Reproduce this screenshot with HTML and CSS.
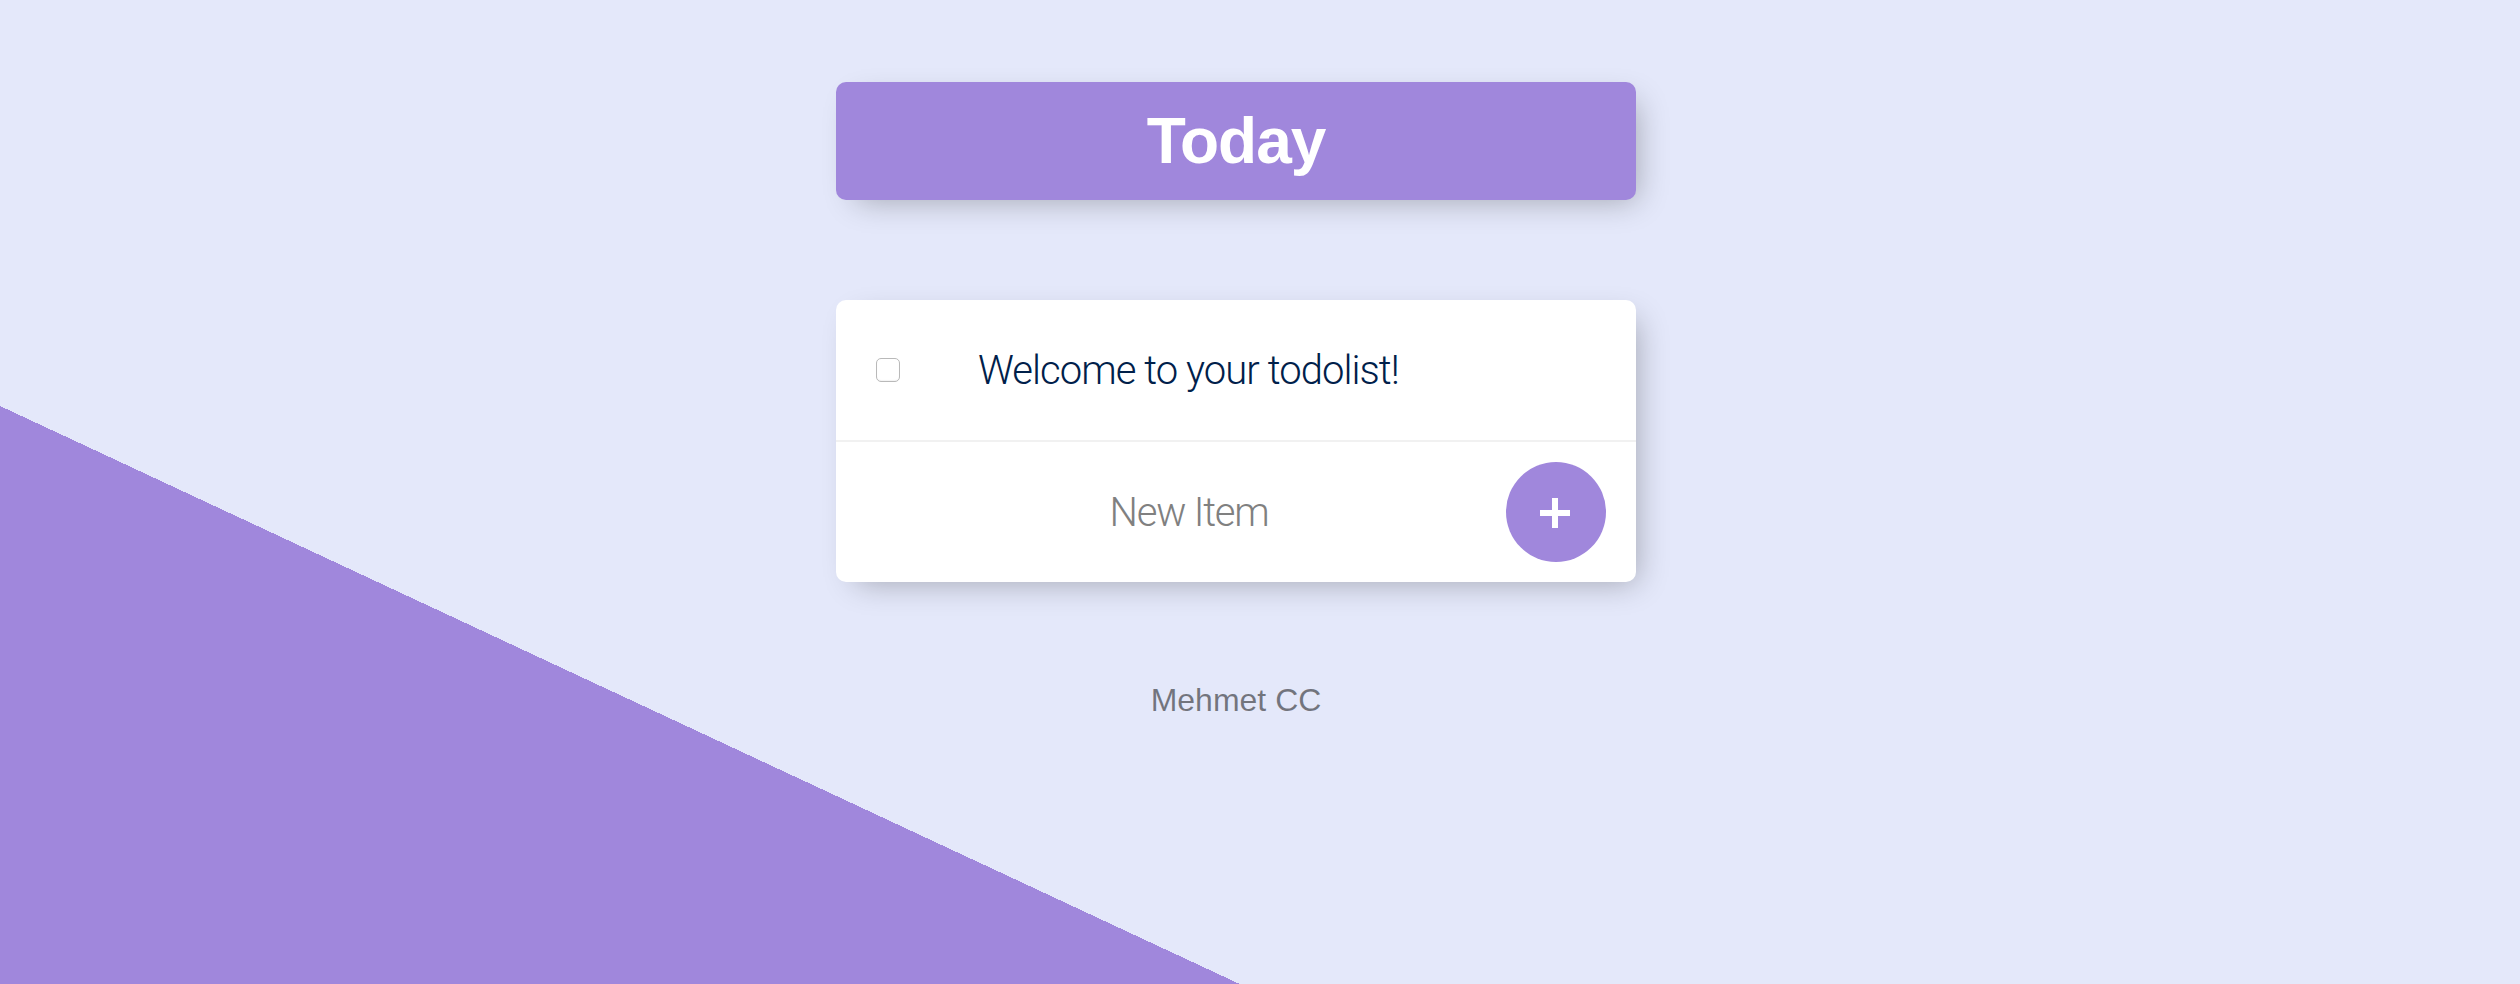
FILE: index.html
```html
<!DOCTYPE html>
<html lang="en">
<head>
<meta charset="utf-8">
<title>To Do List</title>
<link rel="stylesheet" href="styles.css">
</head>
<body>
<div class="page">
  <div class="box heading">
    <h1 class="title">Today</h1>
  </div>
  <div class="box list">
    <div class="item">
      <input class="check" type="checkbox">
      <p class="item-text">Welcome to your todolist!</p>
    </div>
    <form class="item add-form" onsubmit="return false">
      <input class="new-item" type="text" name="newItem" placeholder="New Item" autocomplete="off">
      <button class="add-btn" type="submit" aria-label="Add">
        <svg width="30" height="30" viewBox="0 0 30 30"><rect x="0" y="12" width="30" height="6" fill="#fff"/><rect x="12" y="0" width="6" height="30" fill="#fff"/></svg>
      </button>
    </form>
  </div>
  <footer class="footer">Mehmet CC</footer>
</div>
</body>
</html>
```
FILE: styles.css
```css
html {
  background-color: #e4e8fa;
  background-image: linear-gradient(25deg, #a087dc 50%, #e4e8fa 50%);
  background-size: 2520px 1987px;
  background-repeat: no-repeat;
  background-position: 0 0;
  height: 984px;
  overflow: hidden;
}

body {
  margin: 0;
  font-family: "Liberation Sans", Arial, sans-serif;
}

.page {
  width: 2472px;
  padding-top: 82px;
}

.box {
  width: 800px;
  margin: 0 auto;
  background: #fff;
  border-radius: 10px;
  box-shadow: 10px 10px 30px -10px rgba(0, 0, 0, 0.3);
}

.heading {
  background-color: #a087dc;
}

.title {
  margin: 0;
  padding: 20px;
  color: #fff;
  font-family: "Liberation Sans", Arial, sans-serif;
  font-weight: 700;
  font-size: 64px;
  line-height: 78px;
  letter-spacing: -1px;
  text-align: center;
}

.list {
  margin-top: 100px;
}

.item {
  min-height: 140px;
  display: flex;
  align-items: center;
  border-bottom: 2px solid #f1f1f1;
}

.item:last-child {
  border-bottom: 0;
}

.check {
  appearance: none;
  -webkit-appearance: none;
  width: 24px;
  height: 24px;
  margin: 0 38px 0 40px;
  border: 1.5px solid #b9b9b9;
  border-radius: 5px;
  background: #fff;
  box-shadow: inset 0 -1px 1px rgba(0, 0, 0, 0.05);
  flex: none;
}

.item-text {
  margin: 0;
  padding: 0 40px;
  font-family: Roboto, "Liberation Sans", sans-serif;
  font-weight: 300;
  font-size: 40px;
  letter-spacing: -0.95px;
  color: #00204a;
}

.add-form {
  margin: 0 0 0 40px;
  gap: 4px;
}

.new-item {
  width: 626px;
  height: 120px;
  padding: 0;
  border: none;
  outline: none;
  background: transparent;
  text-align: center;
  font-family: Roboto, "Liberation Sans", sans-serif;
  font-weight: 300;
  font-size: 40px;
  letter-spacing: -1.2px;
  color: #00204a;
}

.new-item::placeholder {
  color: #808080;
  opacity: 1;
}

.add-btn {
  width: 100px;
  height: 100px;
  padding: 0;
  border: 0;
  border-radius: 50%;
  background-color: #a087dc;
  display: flex;
  align-items: center;
  justify-content: center;
  flex: none;
}

.add-btn svg {
  display: block;
  margin: 2px 0 0 -2px;
}

.footer {
  margin-top: 100px;
  text-align: center;
  font-size: 32px;
  line-height: 37px;
  color: rgba(0, 0, 0, 0.5);
}
```
